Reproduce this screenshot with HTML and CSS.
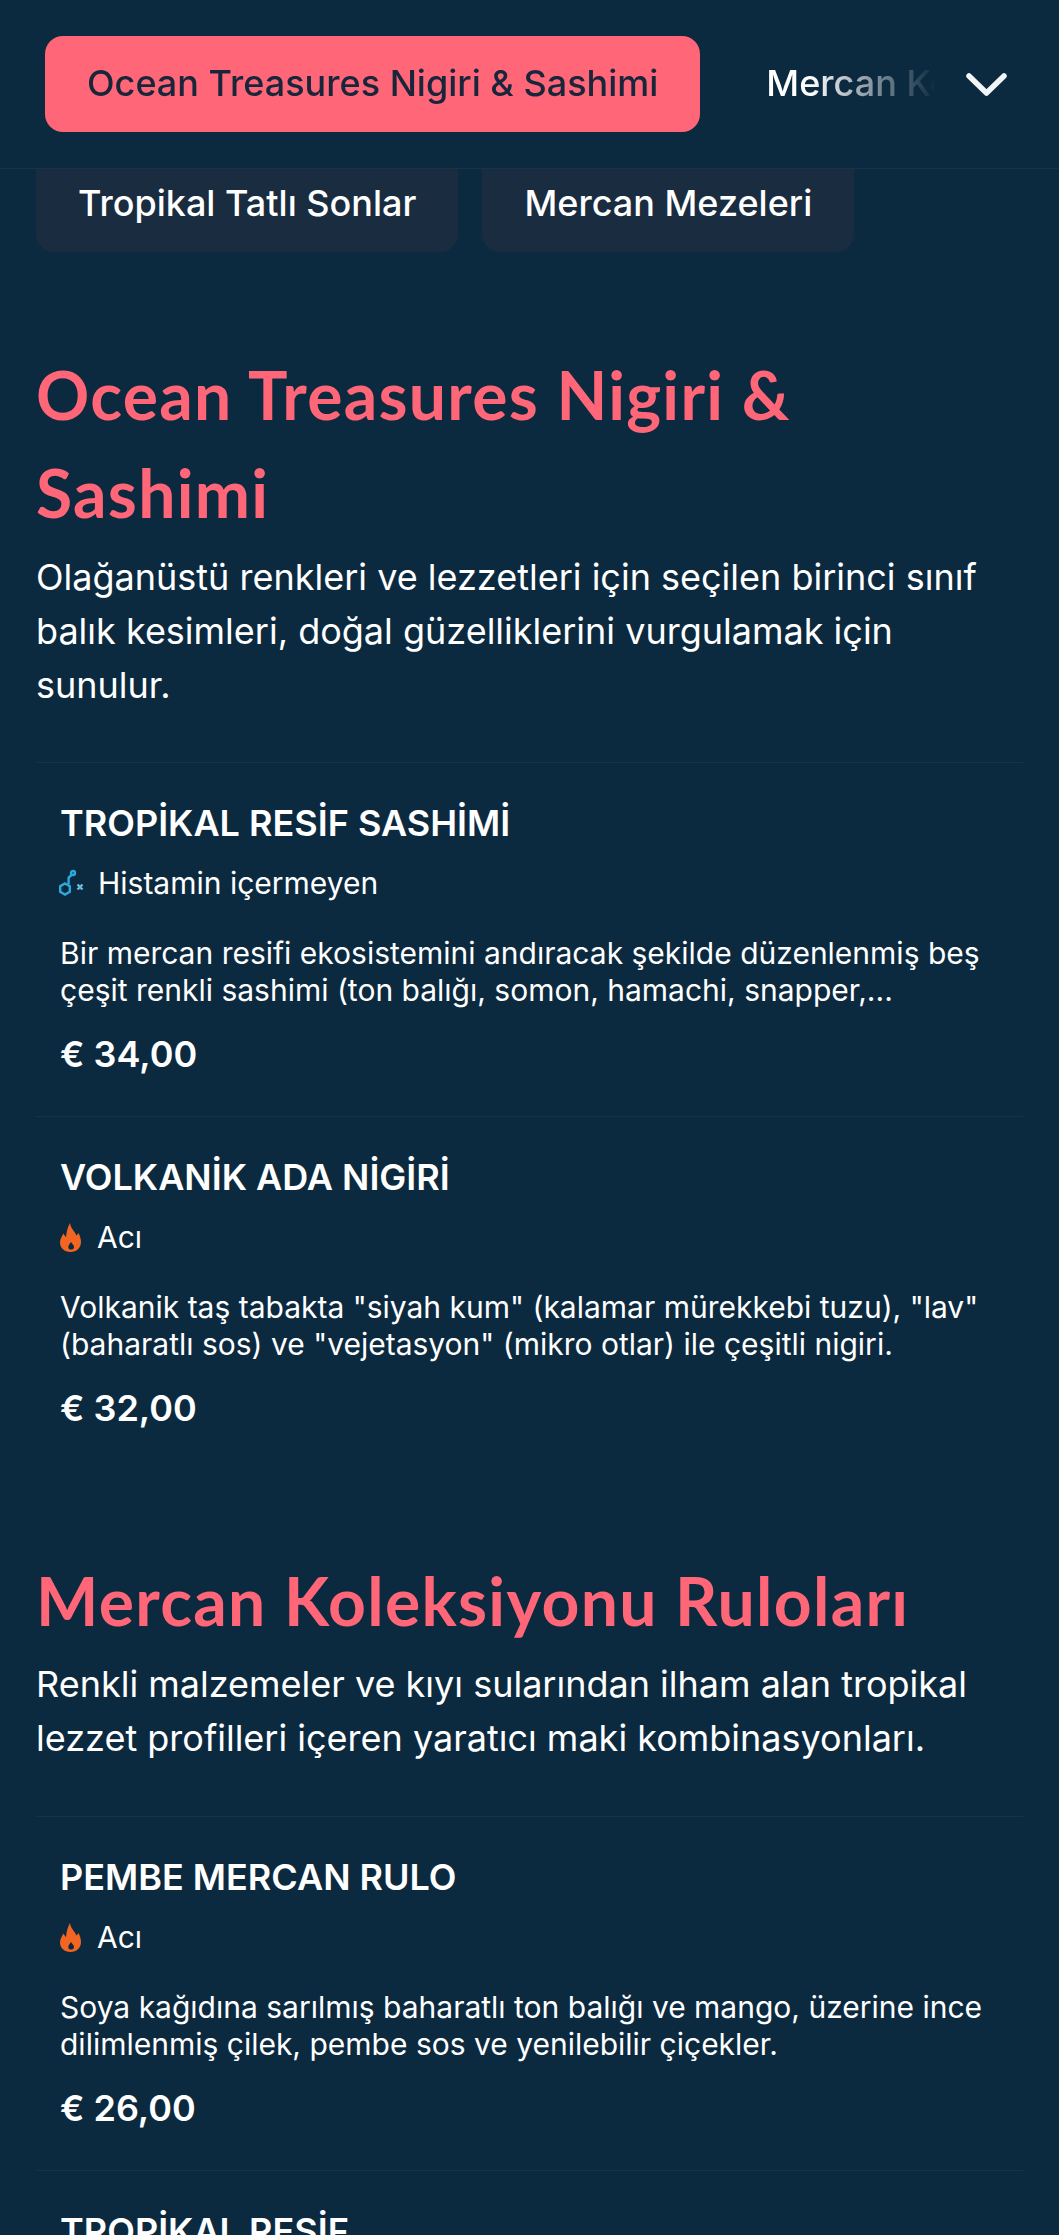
FILE: index.html
```html
<!DOCTYPE html>
<html lang="tr">
<head>
<meta charset="utf-8">
<title>Menü</title>
<link rel="stylesheet" href="styles.css">
</head>
<body>
<header class="topbar">
  <nav class="cat-scroll">
    <a class="cat cat-active">Ocean Treasures Nigiri &amp; Sashimi</a>
    <a class="cat">Mercan Koleksiyonu Ruloları</a>
  </nav>
  <button class="toggle" aria-label="Kategoriler">
    <svg class="chev" viewBox="0 0 41 23"><path d="M3 3 L20.500 20 L38 3"/></svg>
  </button>
</header>
<div class="chips">
  <a class="chip">Tropikal Tatlı Sonlar</a>
  <a class="chip">Mercan Mezeleri</a>
</div>
<main class="menu">
  <section class="sec sec-first">
    <h2 class="sec-title">Ocean Treasures Nigiri &amp; Sashimi</h2>
    <p class="sec-desc">Olağanüstü renkleri ve lezzetleri için seçilen birinci sınıf balık kesimleri, doğal güzelliklerini vurgulamak için sunulur.</p>
    <article class="item">
      <h3 class="item-title">TROPİKAL RESİF SASHİMİ</h3>
      <div class="tag">
        <svg class="icon-hist" viewBox="0 0 28 28"><g class="hist"><path d="M7 14.500 L11.800 17.250 V22.750 L7 25.500 L2.200 22.750 V17.250 Z"/><path d="M10.500 15.500 L10.700 8.500 L13.500 6"/><circle cx="15" cy="4" r="2"/><path class="hist-x" d="M19.500 15.500 L24.500 20.500 M24.500 15.500 L19.500 20.500"/></g></svg>
        <span>Histamin içermeyen</span>
      </div>
      <p class="item-desc">Bir mercan resifi ekosistemini andıracak şekilde düzenlenmiş beş çeşit renkli sashimi (ton balığı, somon, hamachi, snapper,...</p>
      <div class="price">€ 34,00</div>
    </article>
    <article class="item">
      <h3 class="item-title">VOLKANİK ADA NİGİRİ</h3>
      <div class="tag">
        <svg class="icon-fire" viewBox="3 2 21 29"><path class="fire" fill-rule="evenodd" d="M13 2 C13.500 6 15.500 8.500 17.500 11 C18.300 12.200 19 13.500 19.300 14.500 C20.300 13.800 21 13 21.500 12 C23 15 24 18 24 21 C24 27 19.500 31 13.500 31 C7.500 31 3 27 3 21.500 C3 18 5 15 6.500 12.500 C7.300 14 8 15 9 16 C9.500 11 10.500 6 13 2 Z M14 21 C12.500 23 11.300 24.500 11.300 26 C11.300 27.800 12.600 28.600 14 28.600 C15.500 28.600 17 27.800 17 26 C17 24.500 15.500 23 14 21 Z"/></svg>
        <span>Acı</span>
      </div>
      <p class="item-desc">Volkanik taş tabakta "siyah kum" (kalamar mürekkebi tuzu), "lav" (baharatlı sos) ve "vejetasyon" (mikro otlar) ile çeşitli nigiri.</p>
      <div class="price">€ 32,00</div>
    </article>
  </section>
  <section class="sec">
    <h2 class="sec-title">Mercan Koleksiyonu Ruloları</h2>
    <p class="sec-desc sec-desc-roll">Renkli malzemeler ve kıyı sularından ilham alan tropikal lezzet profilleri içeren yaratıcı maki kombinasyonları.</p>
    <article class="item">
      <h3 class="item-title">PEMBE MERCAN RULO</h3>
      <div class="tag">
        <svg class="icon-fire" viewBox="3 2 21 29"><path class="fire" fill-rule="evenodd" d="M13 2 C13.500 6 15.500 8.500 17.500 11 C18.300 12.200 19 13.500 19.300 14.500 C20.300 13.800 21 13 21.500 12 C23 15 24 18 24 21 C24 27 19.500 31 13.500 31 C7.500 31 3 27 3 21.500 C3 18 5 15 6.500 12.500 C7.300 14 8 15 9 16 C9.500 11 10.500 6 13 2 Z M14 21 C12.500 23 11.300 24.500 11.300 26 C11.300 27.800 12.600 28.600 14 28.600 C15.500 28.600 17 27.800 17 26 C17 24.500 15.500 23 14 21 Z"/></svg>
        <span>Acı</span>
      </div>
      <p class="item-desc">Soya kağıdına sarılmış baharatlı ton balığı ve mango, üzerine ince dilimlenmiş çilek, pembe sos ve yenilebilir çiçekler.</p>
      <div class="price">€ 26,00</div>
    </article>
    <article class="item item-last">
      <h3 class="item-title">TROPİKAL RESİF</h3>
    </article>
  </section>
</main>
</body>
</html>
```
FILE: styles.css
```css
* { box-sizing: border-box; }
html, body { margin: 0; padding: 0; height: 2235px; overflow: hidden; }
body {
  background: #0c2a3f;
  color: #fff;
  font-family: "Inter", "Liberation Sans", sans-serif;
}
.topbar {
  height: 169px;
  display: flex;
  align-items: flex-start;
  padding: 36px 52px 0 45px;
  border-bottom: 1px solid #173347;
}
.cat-scroll {
  flex: 1;
  min-width: 0;
  display: flex;
  gap: 66px;
  overflow: hidden;
  white-space: nowrap;
  -webkit-mask-image: linear-gradient(to right, #000 85%, transparent 99%);
  mask-image: linear-gradient(to right, #000 85%, transparent 99%);
}
.cat {
  flex: none;
  height: 96px;
  padding-bottom: 2px;
  display: flex;
  align-items: center;
  font-size: 36px;
  font-weight: 500;
}
.cat-active {
  padding: 0 42px 2px;
  border-radius: 18px;
  background: #ff6678;
  color: #17263b;
}
.toggle {
  flex: none;
  margin: 37px 0 0 21px;
  padding: 0;
  border: 0;
  background: none;
  line-height: 0;
}
.chev { width: 41px; height: 23px; fill: none; stroke: #f2f6f8; stroke-width: 5.500; stroke-linecap: round; stroke-linejoin: round; }
.chips {
  display: flex;
  gap: 24px;
  padding: 0 36px;
}
.chip {
  height: 83px;
  padding: 0 42px 15px;
  display: flex;
  align-items: center;
  font-size: 36px;
  font-weight: 500;
  background: #1a2c3f;
  border-radius: 0 0 18px 18px;
}
.menu { padding: 0 36px; }
.sec { padding-top: 82px; }
.sec-first { padding-top: 94px; }
.sec-title {
  margin: 0;
  color: #ff6678;
  font-family: "Lato", "Noto Sans", sans-serif;
  font-size: 66px;
  font-weight: 700;
  letter-spacing: 1.300px;
  line-height: 98px;
}
.sec-desc {
  margin: 8px 0 50px;
  font-size: 36px;
  line-height: 54px;
}
.sec-desc-roll { margin: 7px 0 51px; }
.item {
  height: 354px;
  padding: 38px 24px 0;
  border-top: 1px solid #173347;
}
.item-title {
  margin: 0;
  font-size: 36px;
  font-weight: 600;
  line-height: 44px;
}
.tag {
  height: 42px;
  margin-top: 17px;
  display: flex;
  align-items: center;
  font-size: 30px;
}
.icon-hist { width: 28px; height: 28px; flex: none; margin: 0 12px 0 -2px; }
.icon-fire { width: 21px; height: 29px; flex: none; margin-right: 16px; }
.hist { fill: none; stroke: #2ea8dc; stroke-width: 2.400; }
.hist-x { stroke: #6fb9d9; }
.fire { fill: #f26522; }
.item-desc {
  margin: 31px 0 0;
  font-size: 30px;
  line-height: 37px;
}
.price {
  margin-top: 23px;
  font-size: 36px;
  font-weight: 600;
  line-height: 44px;
}
.item-last { height: 66px; overflow: hidden; }
```
